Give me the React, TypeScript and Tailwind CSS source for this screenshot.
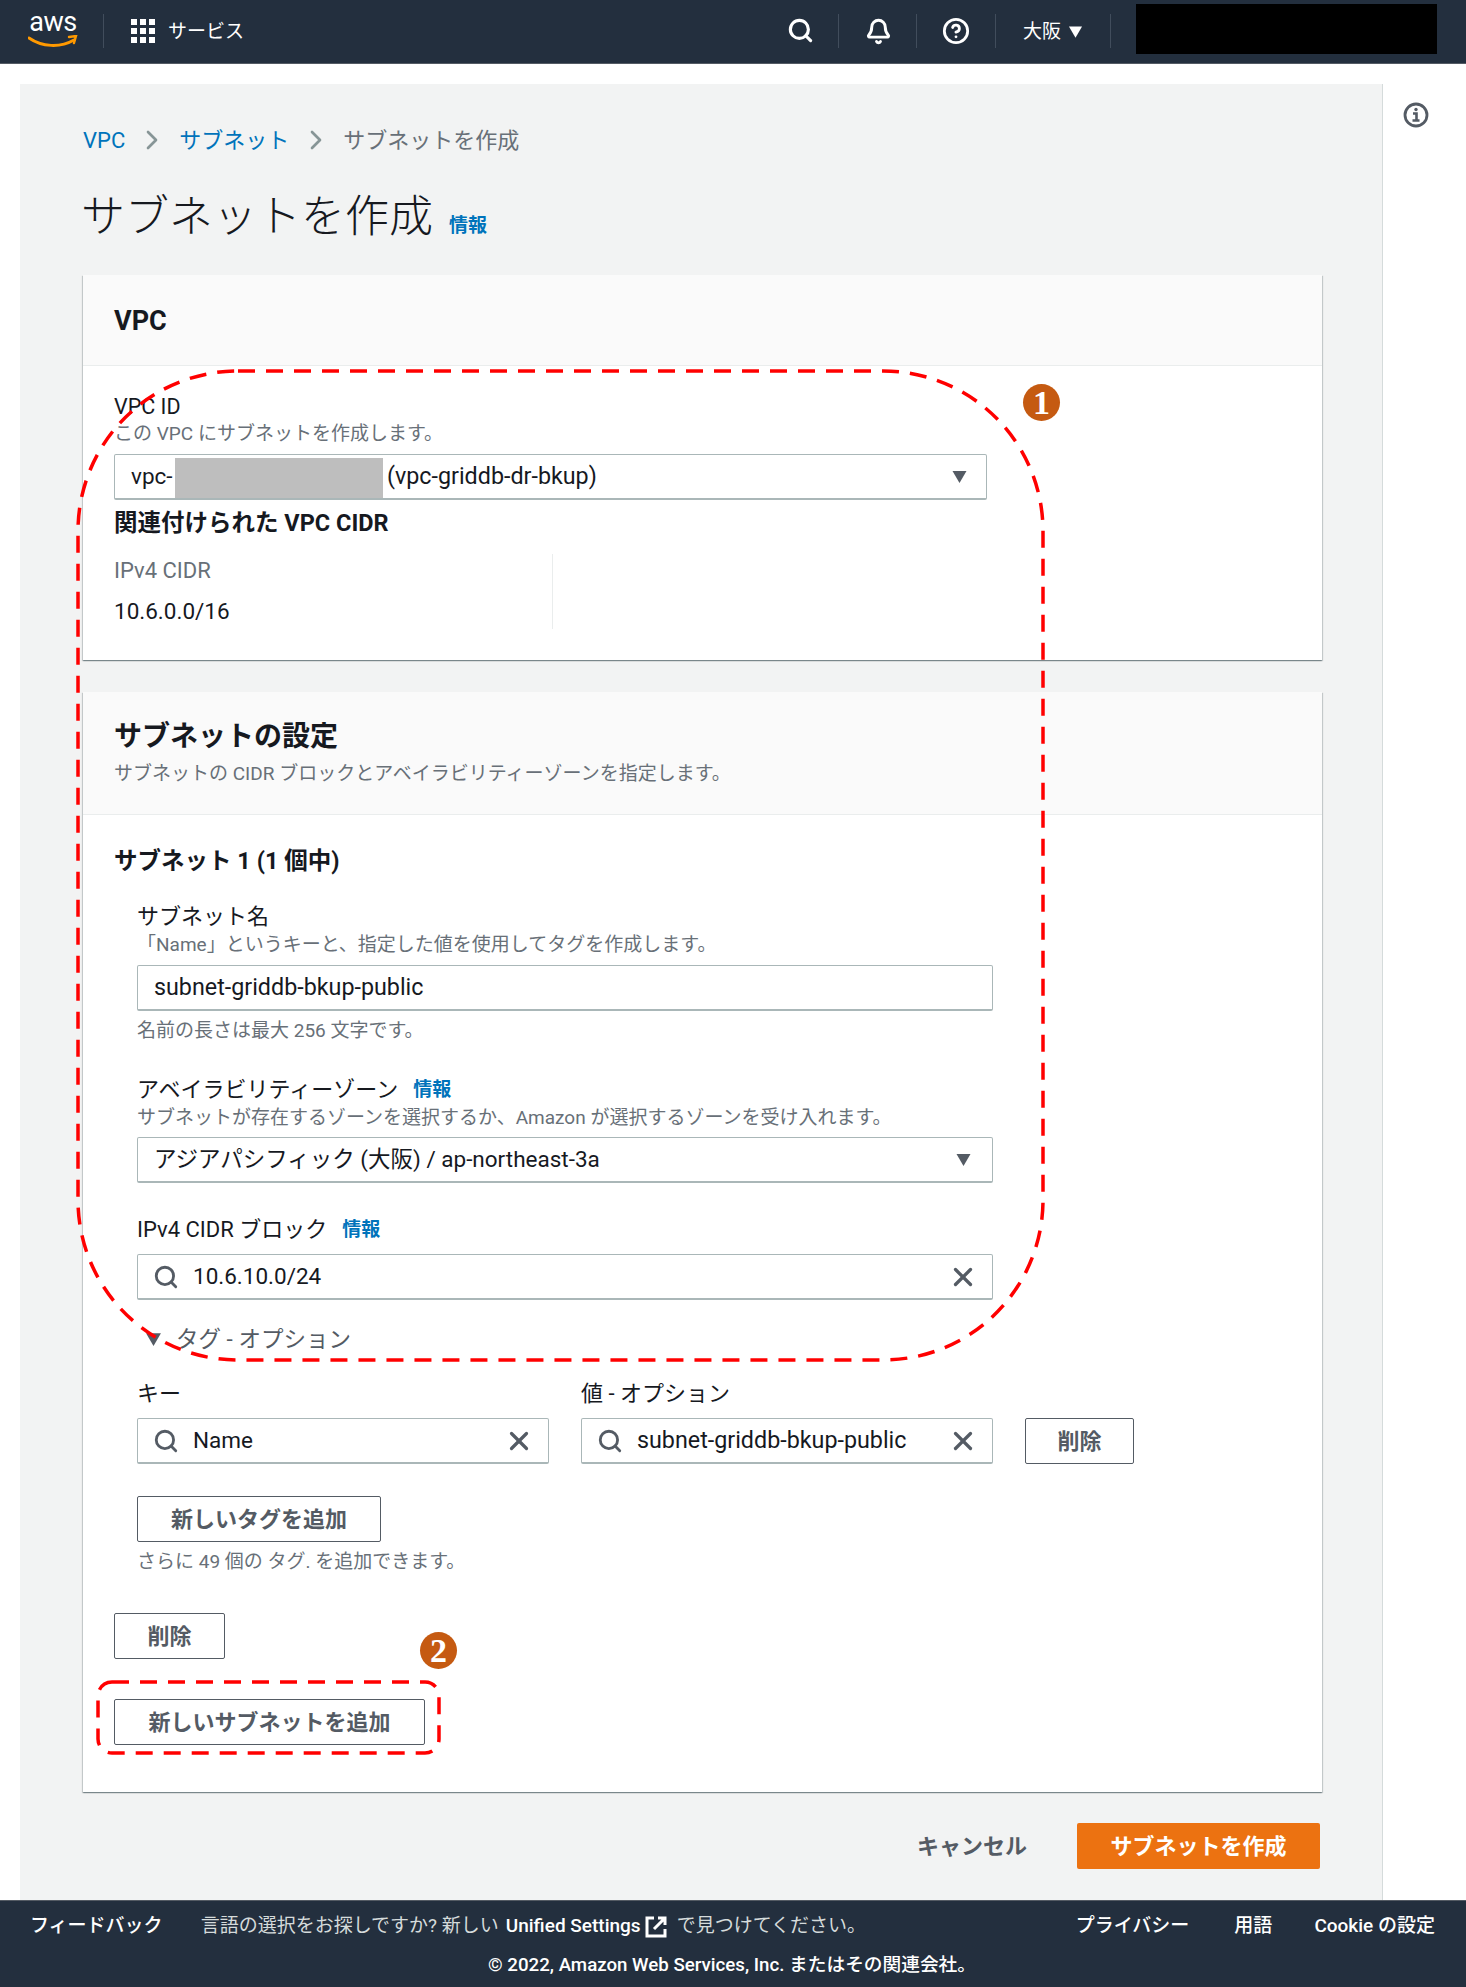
import React from "react";
import { Search, X, Bell, CircleHelp, ChevronRight } from "lucide-react";

const fontCls = "font-['Roboto','Noto_Sans_CJK_JP',sans-serif]";

const Triangle = ({ cls }: { cls: string }) => (
  <svg viewBox="0 0 16 14" className={cls} fill="currentColor">
    <path d="M1 1h14L8 13z" />
  </svg>
);

const Divider = ({ cls }: { cls: string }) => (
  <span className={`absolute top-[14px] h-[34px] w-px bg-[#414d5c] ${cls}`} />
);

const TextBox = ({ children, cls }: { children: React.ReactNode; cls: string }) => (
  <div
    className={`flex h-[46px] items-center rounded-[2px] border border-[#aab7b8] border-b-2 bg-white text-[22.5px] text-[#16191f] ${cls}`}
  >
    {children}
  </div>
);

const SearchBox = ({ value, cls, valueCls = "" }: { value: string; cls: string; valueCls?: string }) => (
  <TextBox cls={`pl-[15px] pr-[14px] ${cls}`}>
    <Search className="h-[26px] w-[26px] text-[#545b64]" strokeWidth={2.6} />
    <span className={`ml-[14px] flex-1 ${valueCls}`}>{value}</span>
    <X className="h-[30px] w-[30px] text-[#545b64]" strokeWidth={2.6} />
  </TextBox>
);

const Btn = ({ children, cls }: { children: React.ReactNode; cls: string }) => (
  <button
    className={`flex h-[46px] items-center justify-center rounded-[2px] border border-[#545b64] bg-white text-[22px] font-bold text-[#545b64] ${cls}`}
  >
    {children}
  </button>
);

const Info = () => <span className="text-[19px] font-bold text-[#0073bb]">情報</span>;

const Badge = ({ n, cls }: { n: string; cls: string }) => (
  <div
    className={`absolute flex h-[37px] w-[37px] items-center justify-center rounded-full bg-[#c55a11] font-['Liberation_Serif',serif] text-[34px] font-bold text-white ${cls}`}
  >
    {n}
  </div>
);

export default function App() {
  return (
    <div className={`relative flex h-[1987px] w-[1466px] flex-col overflow-hidden bg-white ${fontCls}`}>
      {/* top nav */}
      <header className="relative h-[64px] shrink-0 border-b border-[#545b64] bg-[#232f3e] text-white">
        <div className="absolute left-[28px] top-[9px] flex w-[50px] flex-col items-center">
          <span className="text-[27px] leading-[26px] tracking-[-0.5px]">aws</span>
          <svg viewBox="0 0 50 14" className="h-[14px] w-[50px]" fill="none">
            <path d="M1 3c13 9 31 10 45 2" stroke="#ff9900" strokeWidth="3" strokeLinecap="round" />
            <path d="M41 2l7-1-2 7" stroke="#ff9900" strokeWidth="2.4" strokeLinecap="round" />
          </svg>
        </div>
        <Divider cls="left-[103px]" />
        <div className="absolute left-[131px] top-[19px] grid grid-cols-3 gap-[3px]">
          {Array.from({ length: 9 }).map((_, i) => (
            <span key={i} className="h-[6px] w-[6px] bg-white" />
          ))}
        </div>
        <span className="absolute left-[168px] top-[18px] text-[19px] leading-[28px]">サービス</span>
        <Search className="absolute left-[787px] top-[17px] h-[27px] w-[27px]" strokeWidth={2.8} />
        <Divider cls="left-[838px]" />
        <Bell className="absolute left-[865px] top-[18px] h-[27px] w-[27px]" strokeWidth={2.6} />
        <Divider cls="left-[916px]" />
        <CircleHelp className="absolute left-[942px] top-[17px] h-[28px] w-[28px]" strokeWidth={2.4} />
        <Divider cls="left-[995px]" />
        <span className="absolute left-[1023px] top-[18px] text-[19px] leading-[28px]">大阪</span>
        <Triangle cls="absolute left-[1068px] top-[25px] h-[14px] w-[15px] text-white" />
        <Divider cls="left-[1110px]" />
        <div className="absolute left-[1136px] top-[4px] h-[50px] w-[301px] bg-black" />
      </header>

      <div className="flex h-[1836px] shrink-0 pl-[20px] pt-[20px]">
        {/* main */}
        <main className="h-[1816px] w-[1363px] border-r border-[#d5dbdb] bg-[#f2f3f3] pl-[63px] pr-[60px]">
          <nav className="mt-[40px] flex h-[32px] items-center text-[22px]">
            <span className="text-[#0073bb]">VPC</span>
            <ChevronRight className="mx-[11px] h-[34px] w-[32px] text-[#879596]" strokeWidth={2} />
            <span className="text-[#0073bb]">サブネット</span>
            <ChevronRight className="mx-[11px] h-[34px] w-[32px] text-[#879596]" strokeWidth={2} />
            <span className="text-[#687078]">サブネットを作成</span>
          </nav>
          <div className="mt-[35px] flex h-[52px] items-center">
            <h1 className="-ml-[2px] text-[44px] font-light leading-[52px] text-[#16191f]">サブネットを作成</h1>
            <span className="ml-[16px] mt-[18px]">
              <Info />
            </span>
          </div>

          <section className="mt-[32px] h-[385px] bg-white shadow-[0_1px_1px_rgba(0,28,36,0.3),1px_1px_1px_rgba(0,28,36,0.15),-1px_1px_1px_rgba(0,28,36,0.15)]">
            <div className="flex h-[91px] items-center border-b border-[#eaeded] bg-[#fafafa] px-[31px] pt-[2px]">
              <h2 className="text-[27px] font-bold text-[#16191f]">VPC</h2>
            </div>
            <div className="px-[31px] pt-[26px]">
              <div className="text-[21.5px] leading-[30px] text-[#16191f]">VPC ID</div>
              <div className="text-[19px] leading-[24px] text-[#687078]">この VPC にサブネットを作成します。</div>
              <TextBox cls="mt-[8px] w-[873px] pl-[16px] pr-[18px]">
                <span className="w-[44px] overflow-hidden">vpc-</span>
                <span className="mt-[3px] h-[40px] w-[208px] bg-[#bebebe]" />
                <span className="ml-[4px] flex-1 text-[23.3px]">(vpc-griddb-dr-bkup)</span>
                <Triangle cls="h-[14px] w-[17px] text-[#545b64]" />
              </TextBox>
              <div className="mt-[8px] text-[23.5px] font-bold leading-[30px] text-[#16191f]">
                関連付けられた VPC CIDR
              </div>
              <div className="mt-[16px] h-[75px] w-[439px] border-r border-[#eaeded]">
                <div className="text-[22px] leading-[34px] text-[#687078]">IPv4 CIDR</div>
                <div className="mt-[6px] text-[22.5px] leading-[34px] text-[#16191f]">10.6.0.0/16</div>
              </div>
            </div>
          </section>

          <section className="mt-[32px] h-[1100px] bg-white shadow-[0_1px_1px_rgba(0,28,36,0.3),1px_1px_1px_rgba(0,28,36,0.15),-1px_1px_1px_rgba(0,28,36,0.15)]">
            <div className="h-[123px] border-b border-[#eaeded] bg-[#fafafa] px-[31px] pt-[25px]">
              <h2 className="text-[28px] font-bold leading-[40px] text-[#16191f]">サブネットの設定</h2>
              <p className="text-[19px] leading-[34px] text-[#687078]">
                サブネットの CIDR ブロックとアベイラビリティーゾーンを指定します。
              </p>
            </div>
            <div className="px-[31px] pt-[30px]">
              <h3 className="text-[23.5px] font-bold leading-[32px] text-[#16191f]">サブネット 1 (1 個中)</h3>
              <div className="pl-[23px]">
                <div className="mt-[25px] text-[22px] leading-[30px] text-[#16191f]">サブネット名</div>
                <div className="mt-[1px] text-[19px] leading-[24px] text-[#687078]">
                  「Name」というキーと、指定した値を使用してタグを作成します。
                </div>
                <TextBox cls="mt-[8px] w-[856px] pl-[16px] text-[23.3px]">
                  <span className="text-[23.3px]">subnet-griddb-bkup-public</span>
                </TextBox>
                <div className="mt-[6px] text-[19px] leading-[28px] text-[#687078]">名前の長さは最大 256 文字です。</div>

                <div className="mt-[29px] flex items-center text-[22px] leading-[30px] text-[#16191f]">
                  アベイラビリティーゾーン
                  <span className="ml-[15px]">
                    <Info />
                  </span>
                </div>
                <div className="mt-[1px] text-[19px] leading-[24px] text-[#687078]">
                  サブネットが存在するゾーンを選択するか、Amazon が選択するゾーンを受け入れます。
                </div>
                <TextBox cls="mt-[7px] w-[856px] pl-[16px] pr-[20px]">
                  <span className="flex-1">アジアパシフィック (大阪) / ap-northeast-3a</span>
                  <Triangle cls="h-[14px] w-[17px] text-[#545b64]" />
                </TextBox>

                <div className="mt-[31px] flex items-center text-[22px] leading-[30px] text-[#16191f]">
                  IPv4 CIDR ブロック
                  <span className="ml-[15px]">
                    <Info />
                  </span>
                </div>
                <SearchBox value="10.6.10.0/24" cls="mt-[9px] w-[856px]" />

                <div className="mt-[23px] flex items-center text-[22.5px] leading-[32px] text-[#545b64]">
                  <Triangle cls="ml-[8px] mr-[14px] h-[15px] w-[17px] text-[#545b64]" />
                  タグ - オプション
                </div>

                <div className="mt-[24px] flex text-[22px] leading-[30px] text-[#16191f]">
                  <span className="w-[444px]">キー</span>
                  <span>値 - オプション</span>
                </div>
                <div className="mt-[9px] flex">
                  <SearchBox value="Name" cls="w-[412px]" />
                  <SearchBox value="subnet-griddb-bkup-public" valueCls="text-[23.3px]" cls="ml-[32px] w-[412px]" />
                  <Btn cls="ml-[32px] w-[109px]">削除</Btn>
                </div>
                <Btn cls="mt-[32px] w-[244px]">新しいタグを追加</Btn>
                <div className="mt-[6px] text-[19px] leading-[28px] text-[#687078]">さらに 49 個の タグ. を追加できます。</div>
              </div>
              <Btn cls="mt-[37px] w-[111px]">削除</Btn>
              <Btn cls="mt-[40px] w-[311px]">新しいサブネットを追加</Btn>
            </div>
          </section>

          <div className="mt-[31px] flex items-center">
            <span className="ml-[834px] w-[160px] text-[22px] font-bold text-[#545b64]">キャンセル</span>
            <button className="h-[46px] w-[243px] rounded-[2px] bg-[#ec7211] text-[22px] font-bold text-white">
              サブネットを作成
            </button>
          </div>
        </main>
        {/* tools rail */}
        <aside className="flex-1 pl-[20px] pt-[18px]">
          <svg viewBox="0 0 26 26" className="h-[26px] w-[26px] text-[#545b64]" fill="none" stroke="currentColor">
            <circle cx="13" cy="13" r="11" strokeWidth="2.8" />
            <circle cx="13" cy="7.5" r="1.7" fill="currentColor" stroke="none" />
            <path d="M10 11.5h3.5V18M9.5 18.5h7" strokeWidth="2.6" />
          </svg>
        </aside>
      </div>

      {/* footer */}
      <footer className="h-[87px] shrink-0 border-t border-[#545b64] bg-[#232f3e] text-[19px] text-white">
        <div className="flex h-[50px] items-center pl-[30px] pr-[31px] pt-[1px]">
          <span className="font-medium">フィードバック</span>
          <span className="ml-[38px] text-[#d5dbdb]">言語の選択をお探しですか? 新しい</span>
          <span className="ml-[7px] font-medium">Unified Settings</span>
          <svg viewBox="0 0 24 24" className="ml-[3px] h-[24px] w-[24px]" fill="none" stroke="white" strokeWidth="3">
            <path d="M10 3H3v18h18v-7M14 3h7v7M21 3L10 14" />
          </svg>
          <span className="ml-[9px] text-[#d5dbdb]">で見つけてください。</span>
          <span className="ml-auto font-medium">プライバシー</span>
          <span className="ml-[45px] font-medium">用語</span>
          <span className="ml-[42px] font-medium">Cookie の設定</span>
        </div>
        <div className="ml-[488px] text-[18.7px] font-medium leading-[28px]">© 2022, Amazon Web Services, Inc. またはその関連会社。</div>
      </footer>

      {/* annotations over the screenshot */}
      <svg className="pointer-events-none absolute left-0 top-0 h-[1987px] w-[1466px]" viewBox="0 0 1466 1987" fill="none">
        <rect x="78" y="371" width="965" height="989" rx="160" stroke="#ff0000" strokeWidth="3.5" strokeDasharray="17 11" />
        <rect x="98" y="1682" width="341" height="71" rx="14" stroke="#ff0000" strokeWidth="3.5" strokeDasharray="17 11" />
      </svg>
      <Badge n="1" cls="left-[1023px] top-[384px]" />
      <Badge n="2" cls="left-[420px] top-[1632px]" />
    </div>
  );
}
